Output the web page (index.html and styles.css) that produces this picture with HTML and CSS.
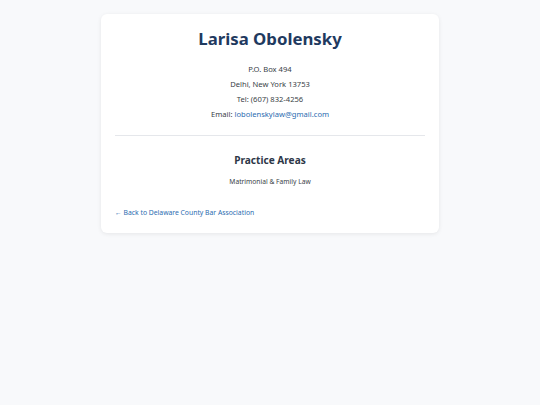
FILE: index.html
```html
<!DOCTYPE html>
<html lang="en">
<head>
<meta charset="utf-8">
<title>Larisa Obolensky</title>
<link rel="stylesheet" href="styles.css">
</head>
<body>
<main class="card">
  <h1 class="name">Larisa Obolensky</h1>
  <div class="contact">
    <p>P.O. Box 494</p>
    <p>Delhi, New York 13753</p>
    <p>Tel: (607) 832-4256</p>
    <p>Email: <a href="#" class="link">lobolenskylaw@gmail.com</a></p>
  </div>
  <hr class="divider">
  <section class="areas">
    <h2 class="areas-title">Practice Areas</h2>
    <p class="areas-list">Matrimonial &amp; Family Law</p>
  </section>
  <a href="#" class="back link">← Back to Delaware County Bar Association</a>
</main>
</body>
</html>
```

FILE: styles.css
```css
html, body {
  margin: 0;
  padding: 0;
}
body {
  background: #f8f9fb;
  font-family: "Noto Sans", "Open Sans", sans-serif;
  color: #3a3f47;
  padding-top: 14px;
  min-height: 405px;
  box-sizing: border-box;
}
.card {
  display: block;
  width: 338px;
  margin: 0 auto;
  box-sizing: border-box;
  background: #ffffff;
  border-radius: 6px;
  box-shadow: 0 1px 4px rgba(0, 0, 0, 0.08);
  padding: 12px 14px 14px;
}
.name {
  margin: 0;
  text-align: center;
  font-size: 16.8px;
  line-height: 26px;
  font-weight: 700;
  color: #1f3a5f;
}
.contact {
  margin-top: 10px;
  text-align: center;
  font-size: 7.6px;
}
.contact p {
  margin: 0;
  line-height: 15px;
}
.link {
  color: #2b6cb0;
  text-decoration: none;
}
.divider {
  border: 0;
  border-top: 1px solid #e5e7eb;
  margin: 13px 0 0;
}
.areas {
  text-align: center;
}
.areas-title {
  margin: 16px 0 0;
  font-size: 10.1px;
  line-height: 16px;
  font-weight: 700;
  color: #2d3748;
}
.areas-list {
  margin: 8px 0 0;
  font-size: 6.7px;
  line-height: 12px;
}
.back {
  display: block;
  margin-top: 19px;
  font-size: 6.8px;
  line-height: 12px;
}
```
